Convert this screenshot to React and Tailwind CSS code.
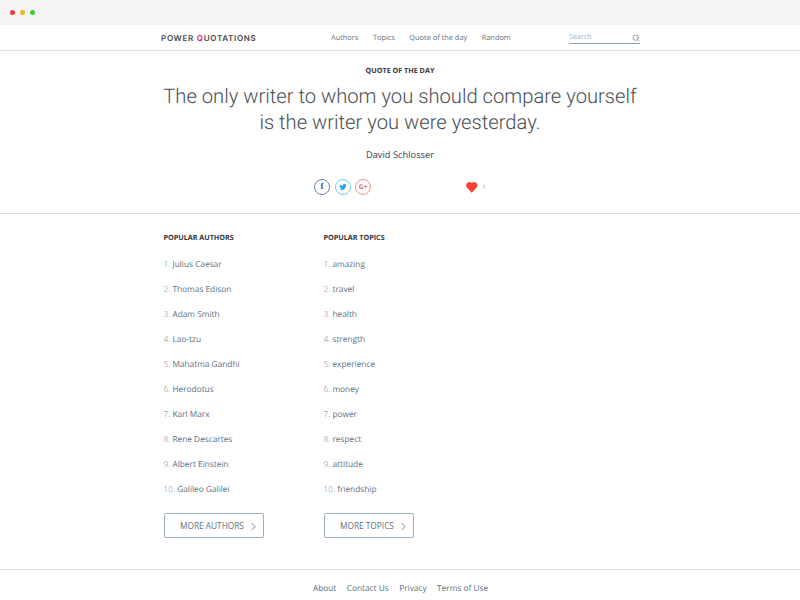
import { Search, ChevronRight } from 'lucide-react'

const navLinks = ['Authors', 'Topics', 'Quote of the day', 'Random']
const authors = ['Julius Caesar', 'Thomas Edison', 'Adam Smith', 'Lao-tzu', 'Mahatma Gandhi', 'Herodotus', 'Karl Marx', 'Rene Descartes', 'Albert Einstein', 'Galileo Galilei']
const topics = ['amazing', 'travel', 'health', 'strength', 'experience', 'money', 'power', 'respect', 'attitude', 'friendship']
const footerLinks = ['About', 'Contact Us', 'Privacy', 'Terms of Use']

function PopularList({ title, items, more, width, className }) {
  return (
    <div className={className}>
      <h2 className="text-[7.2px] leading-[12px] font-bold text-[#33383c]">{title}</h2>
      <ol className="mt-[8.500px]">
        {items.map((item, i) => (
          <li key={item} className="h-[25px] flex items-center text-[8.3px] text-[#5b7285]">
            <span className="text-[#b0b7bd] mr-[2px]">{i + 1}.</span>
            {item}
          </li>
        ))}
      </ol>
      <button className={`${width} mt-[10.500px] h-[25px] flex items-center gap-[3px] pl-[15.5px] pt-[1px] border border-[#9fb0bd] rounded-[2px] text-[8.3px] text-[#5b7285]`}>
        {more}
        <ChevronRight className="w-[13px] h-[13px]" strokeWidth={1.5} />
      </button>
    </div>
  )
}

export default function App() {
  return (
    <div className="w-[800px] h-[600px] overflow-hidden bg-white font-['Open_Sans',sans-serif] [text-rendering:geometricPrecision]">
      {/* Browser bar */}
      <div className="h-[25px] bg-[#f4f4f4] flex items-center gap-[5px] pl-[10px]">
        <span className="w-[5px] h-[5px] rounded-full bg-[#ee3a3a]" />
        <span className="w-[5px] h-[5px] rounded-full bg-[#e9b72c]" />
        <span className="w-[5px] h-[5px] rounded-full bg-[#3ccb3c]" />
      </div>

      {/* Header */}
      <header className="h-[25px] border-b border-[#e2e2e2] flex items-center pl-[161px] box-content">
        <a className="w-[170px] text-[8px] font-semibold tracking-[0.09em] text-[#43474b] font-['Inter',sans-serif] whitespace-nowrap">
          POWER <span className="text-[#ec1c64]">Q</span>UOTATIONS
        </a>
        <nav className="w-[238px] pt-[2px] flex items-center gap-[14.500px] text-[7.4px] text-[#5d7385]">
          {navLinks.map((link) => (
            <a key={link}>{link}</a>
          ))}
        </nav>
        <div className="w-[71px] h-[11px] mt-[1px] border-b border-[#8ea2b2] flex items-center justify-between text-[7.2px] text-[#a9b5bf]">
          Search
          <Search className="w-[8px] h-[8px] text-[#5d7385]" />
        </div>
      </header>

      {/* Quote of the day */}
      <section className="h-[163px] border-b border-[#dedede] flex flex-col items-center">
        <h3 className="mt-[14px] text-[7.2px] leading-[12px] font-bold text-[#33383c]">QUOTE OF THE DAY</h3>
        <p className="mt-[7px] w-[480px] text-center text-[20.2px] leading-[25.5px] font-light text-[#4a5055] font-['Roboto',sans-serif]">
          The only writer to whom you should compare yourself is the writer you were yesterday.
        </p>
        <p className="mt-[13px] text-[9.3px] leading-[14px] text-[#3c4247]">David Schlosser</p>
        <div className="mt-[17px] w-[172px] flex items-center">
          <div className="flex gap-[4.500px]">
            <span className="w-[16px] h-[16px] rounded-full border border-[#6c84b4] flex items-center justify-center text-[9px] font-bold text-[#3b5998] font-['Liberation_Serif',serif]">f</span>
            <span className="w-[16px] h-[16px] rounded-full border border-[#6fd0f5] flex items-center justify-center text-[#1da1f2]">
              <svg viewBox="0 0 24 24" className="w-[8px] h-[8px]" fill="currentColor">
                <path d="M23 5a9 9 0 0 1-2.6.7A4.500 4.500 0 0 0 22.400 3.200a9 9 0 0 1-2.900 1.100 4.500 4.500 0 0 0-7.700 4.100A12.800 12.800 0 0 1 2.500 3.700a4.500 4.500 0 0 0 1.400 6 4.500 4.500 0 0 1-2-.6c0 2.200 1.500 4.100 3.600 4.500a4.500 4.500 0 0 1-2 .1 4.500 4.500 0 0 0 4.200 3.100A9 9 0 0 1 1 18.700 12.800 12.800 0 0 0 20.700 7.300 9 9 0 0 0 23 5z" />
              </svg>
            </span>
            <span className="w-[16px] h-[16px] rounded-full border border-[#e8968b] flex items-center justify-center text-[6.500px] font-bold text-[#dc6a5e]">G+</span>
          </div>
          <svg viewBox="0 0 24 24" className="ml-[93.500px] w-[14px] h-[14px] text-[#f44336]" fill="currentColor">
            <path d="M12 22 2.800 12.600A6 6 0 0 1 2 9a5.800 5.800 0 0 1 10-4 5.800 5.800 0 0 1 10 4 6 6 0 0 1-.8 3.600z" />
          </svg>
          <span className="ml-[4.500px] text-[6px] leading-[8px] text-[#8a949c]">1</span>
        </div>
      </section>

      {/* Popular lists */}
      <main className="h-[356px] border-b border-[#e2e2e2] flex pl-[163.500px] pt-[18px]">
        <PopularList className="w-[160px]" title="POPULAR AUTHORS" items={authors} more="MORE AUTHORS" width="w-[100px]" />
        <PopularList title="POPULAR TOPICS" items={topics} more="MORE TOPICS" width="w-[90px]" />
      </main>

      {/* Footer */}
      <footer className="h-[37px] pt-[2px] pl-[1px] flex items-center justify-center gap-[10.500px] text-[8.3px] text-[#5b7285]">
        {footerLinks.map((link) => (
          <a key={link}>{link}</a>
        ))}
      </footer>
    </div>
  )
}
